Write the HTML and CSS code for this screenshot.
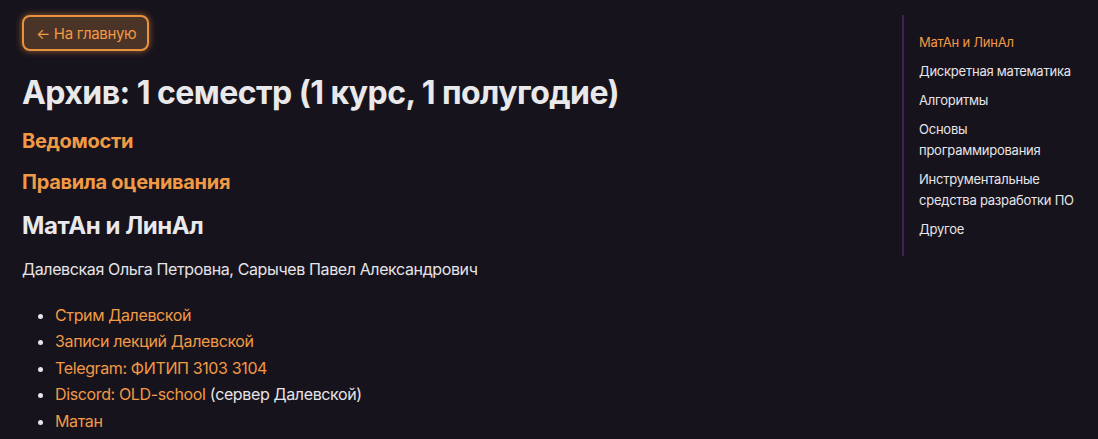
FILE: index.html
```html
<!DOCTYPE html>
<html lang="ru">
<head>
<meta charset="utf-8">
<title>Архив: 1 семестр</title>
<link rel="stylesheet" href="styles.css">
</head>
<body>
<div class="layout">
  <main class="content">
    <a class="back" href="#">← На главную</a>
    <h1 class="title">Архив: 1 семестр (1 курс, 1 полугодие)</h1>
    <h2 class="sub link">Ведомости</h2>
    <h2 class="sub link">Правила оценивания</h2>
    <h2 class="section">МатАн и ЛинАл</h2>
    <p class="teachers">Далевская Ольга Петровна, Сарычев Павел Александрович</p>
    <ul class="links">
      <li><a href="#">Стрим Далевской</a></li>
      <li><a href="#">Записи лекций Далевской</a></li>
      <li><a href="#">Telegram: ФИТИП 3103 3104</a></li>
      <li><a href="#">Discord: OLD-school</a> (сервер Далевской)</li>
      <li><a href="#">Матан</a></li>
    </ul>
  </main>
  <aside class="toc">
    <nav class="toc-list">
      <a class="toc-item active" href="#">МатАн и ЛинАл</a>
      <a class="toc-item" href="#">Дискретная математика</a>
      <a class="toc-item" href="#">Алгоритмы</a>
      <a class="toc-item" href="#">Основы программирования</a>
      <a class="toc-item" href="#">Инструментальные средства разработки ПО</a>
      <a class="toc-item" href="#">Другое</a>
    </nav>
  </aside>
</div>
</body>
</html>
```

FILE: styles.css
```css
html, body {
  margin: 0;
  padding: 0;
  background: #17131c;
  color: #e6e4e8;
  font-family: Inter, "Noto Sans", sans-serif;
  height: 100%;
  overflow: hidden;
}

.layout {
  display: flex;
  align-items: flex-start;
}

.content {
  flex: 1;
  padding: 15px 0 0 22px;
  display: flex;
  flex-direction: column;
  align-items: flex-start;
}

a {
  color: #f19a45;
  text-decoration: none;
}

.back {
  display: inline-flex;
  align-items: center;
  height: 36px;
  box-sizing: border-box;
  padding: 0 11px 0 12px;
  border: 2px solid #e8923f;
  border-radius: 8px;
  background: #4a3327;
  color: #f19a45;
  font-size: 15px;
  letter-spacing: -0.33px;
  box-shadow: 0 0 7px rgba(240, 150, 60, 0.6);
}

.title {
  margin: 22px 0 0;
  font-size: 32px;
  line-height: 40px;
  font-weight: 700;
  letter-spacing: -0.55px;
  color: #e9e8ea;
}

.sub {
  margin: 14px 0 0;
  font-size: 20px;
  line-height: 28px;
  font-weight: 700;
  letter-spacing: -0.3px;
}

.sub + .sub {
  margin-top: 13px;
}

.link {
  color: #f19a45;
}

.section {
  margin: 14px 0 0;
  font-size: 24px;
  line-height: 32px;
  font-weight: 700;
  letter-spacing: -0.45px;
  color: #e9e8ea;
}

.teachers {
  margin: 15px 0 0;
  font-size: 16px;
  line-height: 24px;
  letter-spacing: -0.38px;
}

.links {
  margin: 21px 0 0;
  padding-left: 33px;
  font-size: 16px;
  line-height: 26.4px;
  letter-spacing: -0.37px;
}

.toc {
  width: 196px;
  flex: none;
  padding-top: 15px;
}

.toc-list {
  display: flex;
  flex-direction: column;
  gap: 8px;
  border-left: 2px solid #3d2354;
  padding: 17px 20px 16px 15px;
}

.toc-item {
  font-size: 13px;
  line-height: 21px;
  letter-spacing: -0.24px;
  color: #e6e4e8;
}

.toc-item.active {
  color: #f19a45;
}
```
